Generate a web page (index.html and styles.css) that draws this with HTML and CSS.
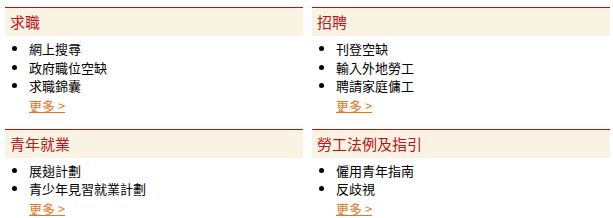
FILE: index.html
```html
<!DOCTYPE html>
<html lang="zh-Hant">
<head>
    <meta charset="UTF-8">
    <title>就業資訊</title>
    <link rel="stylesheet" href="styles.css">
</head>
<body>
    <div class="panels">
        <div class="panel">
            <h2 class="panel-title">求職</h2>
            <ul class="links">
                <li>網上搜尋</li>
                <li>政府職位空缺</li>
                <li>求職錦囊</li>
            </ul>
            <a class="more" href="#">更多 &gt;</a>
        </div>
        <div class="panel">
            <h2 class="panel-title">招聘</h2>
            <ul class="links">
                <li>刊登空缺</li>
                <li>輸入外地勞工</li>
                <li>聘請家庭傭工</li>
            </ul>
            <a class="more" href="#">更多 &gt;</a>
        </div>
        <div class="panel">
            <h2 class="panel-title">青年就業</h2>
            <ul class="links">
                <li>展翅計劃</li>
                <li>青少年見習就業計劃</li>
            </ul>
            <a class="more" href="#">更多 &gt;</a>
        </div>
        <div class="panel">
            <h2 class="panel-title">勞工法例及指引</h2>
            <ul class="links">
                <li>僱用青年指南</li>
                <li>反歧視</li>
            </ul>
            <a class="more" href="#">更多 &gt;</a>
        </div>
    </div>
</body>
</html>
```

FILE: styles.css
```css
body {
    margin: 0;
    padding: 7px 3px 0 5px;
    background: #fff;
    font-family: "Noto Sans CJK TC", "Liberation Sans", sans-serif;
    font-size: 13px;
    color: #000;
}

.panels {
    display: grid;
    grid-template-columns: 1fr 1fr;
    column-gap: 9px;
    row-gap: 14px;
}

.panel-title {
    margin: 0;
    height: 28px;
    line-height: 28px;
    padding-left: 5px;
    border-top: 1px solid #b8121a;
    background: #f8f3e3;
    color: #c0141b;
    font-size: 15px;
    font-weight: normal;
}

.links {
    margin: 4px 0 0;
    padding-left: 24px;
    list-style: disc;
}

.links li {
    line-height: 18.5px;
}

.more {
    display: inline-block;
    margin-left: 24px;
    line-height: 18px;
    color: #e8761e;
    text-decoration: underline;
}
```
